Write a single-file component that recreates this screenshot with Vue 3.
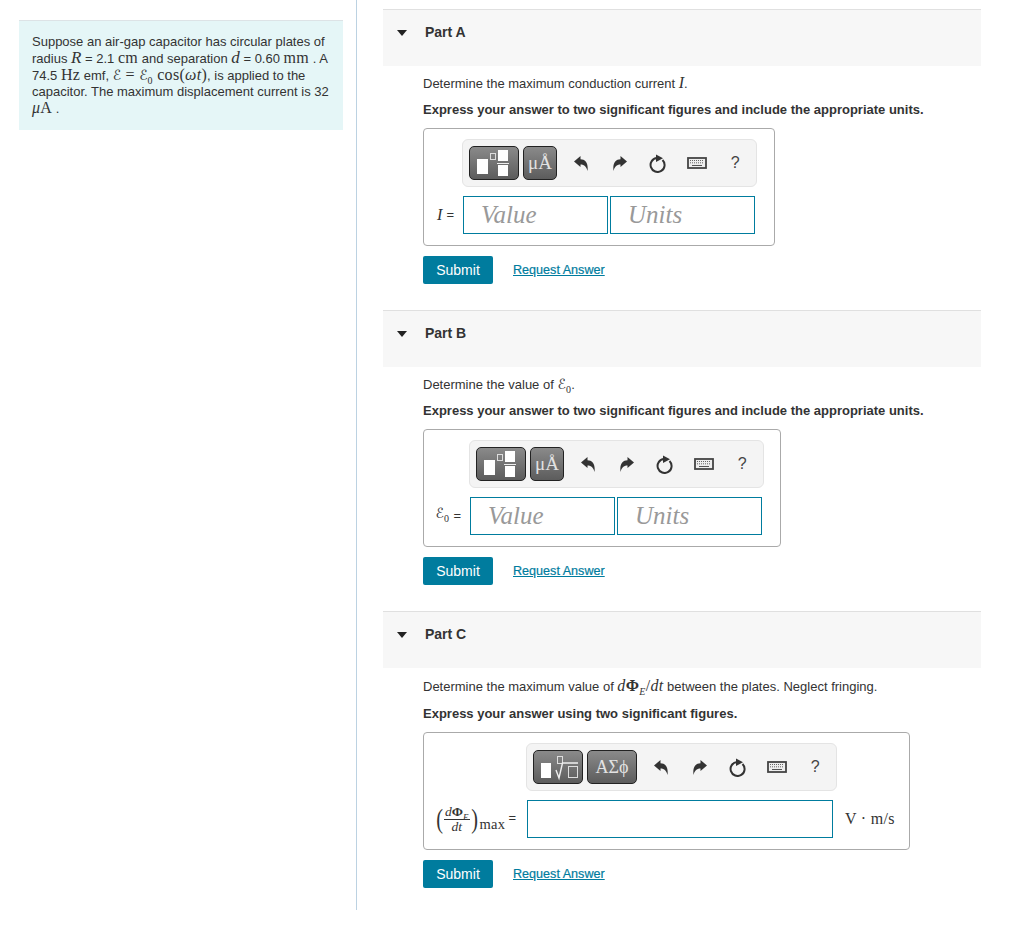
<template>
  <div class="page">
    <aside class="side">
      <div class="intro">
        Suppose an air-gap capacitor has circular plates of radius
        <span class="mi big">R</span> = 2.1 <span class="mn">cm</span> and separation
        <span class="mi big">d</span> = 0.60 <span class="mn">mm</span> . A
        74.5 <span class="mn">Hz</span> emf, <span class="mn"><span class="script">ℰ</span> = <span class="script">ℰ</span><sub>0</sub> cos(<i>ωt</i>)</span>, is applied to the
        capacitor. The maximum displacement current is 32
        <span class="mn"><i>μ</i>A</span> .
      </div>
    </aside>

    <main class="parts">
      <section v-for="part in parts" :key="part.id" class="part" :class="`part-${part.id}`">
        <header class="part-head">
          <span class="caret"></span>
          <h2>Part {{ part.id }}</h2>
        </header>

        <p class="prompt">
          <template v-if="part.id === 'A'">Determine the maximum conduction current <span class="mi">I</span>.</template>
          <template v-else-if="part.id === 'B'">Determine the value of <span class="mn"><span class="script">ℰ</span><sub>0</sub></span>.</template>
          <template v-else>Determine the maximum value of <span class="mn"><i>d</i><b>Φ</b><sub><i>E</i></sub>/<i>dt</i></span> between the plates. Neglect fringing.</template>
        </p>
        <p class="hint">{{ part.hint }}</p>

        <div class="answer">
          <div class="toolbar">
            <button class="tpl wide" type="button">
              <svg v-if="part.id !== 'C'" width="48" height="32" viewBox="0 0 48 32">
                <rect x="7" y="12" width="11" height="15" fill="#fff" />
                <rect x="20.5" y="6.5" width="5" height="6" fill="none" stroke="#ddd" />
                <rect x="28" y="3" width="10" height="11" fill="#fff" />
                <rect x="27" y="16" width="12" height="1" fill="#eee" />
                <rect x="28" y="18" width="10" height="11" fill="#fff" />
              </svg>
              <svg v-else width="48" height="32" viewBox="0 0 48 32">
                <rect x="7" y="12" width="10" height="15" fill="#fff" />
                <rect x="23.5" y="5.5" width="5" height="7" fill="none" stroke="#ddd" />
                <path d="M22 19l3 8 3.500-15H44" fill="none" stroke="#eee" stroke-width="1.400" />
                <rect x="34.500" y="15.500" width="9" height="11" fill="none" stroke="#ddd" />
              </svg>
            </button>
            <button class="tpl" :class="{ wide: part.id === 'C' }" type="button">{{ part.symbols }}</button>

            <div class="tools">
              <svg width="14" height="15" viewBox="0 0 14 15"><path d="M0 5.500 6.500 0v3.200c5 0 8 3.800 7 11.800C12.500 11 10.500 8.500 6.500 8.500V11z" fill="#333" /></svg>
              <svg width="14" height="15" viewBox="0 0 14 15"><path d="M14 5.500 7.500 0v3.200c-5 0-8 3.800-7 11.800C1.500 11 3.500 8.500 7.500 8.500V11z" fill="#333" /></svg>
              <svg width="18" height="19" viewBox="0 0 18 19">
                <path d="M13.500 6A7 7 0 1 1 8 4" fill="none" stroke="#333" stroke-width="2" />
                <path d="M7 0.500 14 4.200 7 8z" fill="#333" />
              </svg>
              <svg width="20" height="12" viewBox="0 0 20 12">
                <rect x="1" y="1" width="18" height="10" fill="#eee" stroke="#444" stroke-width="1.800" />
                <path d="M3 3.500h14M3 5.800h14" stroke="#666" stroke-dasharray="1 1" />
                <path d="M5 8.500h10" stroke="#555" />
              </svg>
              <span class="help">?</span>
            </div>
          </div>

          <div class="label">
            <template v-if="part.id === 'A'"><span class="mi">I</span> =</template>
            <template v-else-if="part.id === 'B'"><span class="mn"><span class="script">ℰ</span><sub>0</sub></span> =</template>
            <template v-else>
              <span class="rate">
                <span class="paren">(</span>
                <span class="frac"><span class="num"><i>d</i><b>Φ</b><sub><i>E</i></sub></span><span class="den"><i>dt</i></span></span>
                <span class="paren">)</span>
                <span class="max">max</span>
              </span>
              <span class="eq">=</span>
            </template>
          </div>

          <div class="inputs">
            <template v-if="part.units">
              <input class="field" type="text" placeholder="Value" />
              <input class="field" type="text" placeholder="Units" />
            </template>
            <input v-else class="field single" type="text" />
          </div>
          <div v-if="!part.units" class="unit">V · m/s</div>
        </div>

        <div class="actions">
          <button class="submit" type="button">Submit</button>
          <a class="reveal" href="#">Request Answer</a>
        </div>
      </section>
    </main>
  </div>
</template>

<script setup>
const unitHint = 'Express your answer to two significant figures and include the appropriate units.'

const parts = [
  { id: 'A', hint: unitHint, symbols: 'μÅ', units: true },
  { id: 'B', hint: unitHint, symbols: 'μÅ', units: true },
  { id: 'C', hint: 'Express your answer using two significant figures.', symbols: 'ΑΣϕ', units: false }
]
</script>

<style>
body {
  background: #fff;
}
</style>

<style scoped>
.page {
  display: flex;
  width: 1021px;
  font-family: "Liberation Sans", Arial, sans-serif;
  font-size: 13px;
  line-height: 16px;
  color: #333;
}

.side {
  box-sizing: border-box;
  width: 357px;
  padding: 20px 0 0 19px;
  border-right: 1px solid #bcd2e2;
}

.intro {
  box-sizing: border-box;
  width: 324px;
  height: 110px;
  padding: 13px 10px 0 13px;
  border-top: 1px solid #dde3e6;
  background: #e5f6f7;
  line-height: 16.750px;
}

/* line-height 0 so inline math never stretches the text lines */
.mi {
  font-family: "Liberation Serif", serif;
  font-style: italic;
  font-size: 16px;
  line-height: 0;
}

.mi.big {
  font-size: 17px;
}

.mn {
  font-family: "Liberation Serif", serif;
  font-size: 16px;
  letter-spacing: 0.300px;
  line-height: 0;
}

.script {
  font-family: "DejaVu Sans", sans-serif;
  font-size: 14px;
  letter-spacing: 0;
}

sub {
  font-size: 10px;
  line-height: 0;
}

.parts {
  flex: 1;
  padding: 9px 0 22px 26px;
}

.part {
  width: 598px;
  margin-bottom: 26px;
}

.part:last-child {
  margin-bottom: 0;
}

.part-head {
  display: flex;
  height: 57px;
  padding-top: 14px;
  box-sizing: border-box;
  border-top: 1px solid #e0e0e0;
  background: #f7f7f7;
}

.caret {
  width: 0;
  height: 0;
  margin: 6px 18px 0 14px;
  border-left: 5.500px solid transparent;
  border-right: 5.500px solid transparent;
  border-top: 6px solid #222;
}

.part-head h2 {
  margin: 0;
  font-size: 14px;
  font-weight: bold;
  line-height: 16px;
}

.prompt,
.hint {
  margin: 0 0 0 40px;
}

.prompt {
  padding-top: 10px;
}

.hint {
  padding-top: 10px;
  font-weight: bold;
}

.part-C .prompt {
  padding-top: 11px;
}

.part-C .hint {
  padding-top: 11px;
}

.answer {
  display: grid;
  grid-template-columns: 39px auto auto;
  row-gap: 9px;
  align-items: center;
  width: fit-content;
  margin: 10px 0 0 40px;
  padding: 10px 17px 11px 0;
  border: 1px solid #aaa;
  border-radius: 4px;
}

.part-B .answer {
  grid-template-columns: 46px auto auto;
  padding-right: 16px;
}

.part-C .answer {
  grid-template-columns: 103px auto auto;
  padding-right: 14px;
}

.toolbar {
  grid-column: 2 / 4;
  grid-row: 1;
  display: flex;
  align-items: center;
  justify-self: start;
  height: 48px;
  box-sizing: border-box;
  margin-left: -1px;
  padding-left: 6px;
  border: 1px solid #e4e4e4;
  border-radius: 6px;
  background: #f4f4f4;
}

.tpl {
  width: 34px;
  height: 34px;
  margin-right: 4px;
  padding: 0;
  border: 1px solid #222;
  border-radius: 5px;
  background: linear-gradient(#8a8a8a, #5c5c5c);
  color: #e2e2e2;
  font-family: "Liberation Serif", serif;
  font-size: 19px;
  line-height: 30px;
}

.tpl.wide {
  width: 50px;
  font-size: 18px;
}

.tpl svg {
  display: block;
}

.tools {
  display: grid;
  grid-template-columns: repeat(5, 38.500px);
  justify-items: center;
  align-items: center;
  margin-left: 1px;
  padding-right: 1px;
}

.help {
  font-size: 16px;
  color: #444;
}

.label {
  grid-column: 1;
  grid-row: 2;
  justify-self: end;
  display: flex;
  align-items: center;
  gap: 4px;
  padding-right: 9px;
  white-space: nowrap;
}

.part-C .label {
  gap: 3px;
  padding-right: 11px;
}

.rate {
  display: inline-flex;
  align-items: center;
  font-family: "Liberation Serif", serif;
}

.paren {
  font-size: 27px;
  font-weight: normal;
  line-height: 1;
  transform: scaleX(0.75);
}

.frac {
  display: inline-flex;
  flex-direction: column;
  align-items: center;
  font-size: 13.500px;
  line-height: 14px;
}

.num {
  padding: 0 1px;
  border-bottom: 1px solid #333;
}

.num sub {
  font-size: 9px;
}

.max {
  align-self: flex-end;
  margin-left: 1px;
  font-size: 14.500px;
  letter-spacing: 0.300px;
  line-height: 14px;
  padding-bottom: 3px;
}

.eq {
  margin-top: -2px;
}

.inputs {
  grid-column: 2;
  grid-row: 2;
  display: flex;
  gap: 2px;
}

.field {
  box-sizing: border-box;
  width: 145px;
  height: 38px;
  padding: 0 0 0 17px;
  border: 1px solid #007c9e;
  border-radius: 0;
  background: #fff;
  font-family: "Liberation Serif", serif;
  font-size: 25px;
  font-style: italic;
  outline: none;
}

.field::placeholder {
  color: #999;
  opacity: 1;
}

.field.single {
  width: 306px;
}

.unit {
  grid-column: 3;
  grid-row: 2;
  margin-left: 12px;
  font-family: "Liberation Serif", serif;
  font-size: 16px;
  letter-spacing: 0.300px;
  white-space: nowrap;
}

.actions {
  display: flex;
  align-items: center;
  margin: 10px 0 0 40px;
}

.submit {
  width: 70px;
  height: 28px;
  padding: 0;
  border: 0;
  border-radius: 2px;
  background: #007c9e;
  color: #fff;
  font-family: inherit;
  font-size: 14px;
}

.reveal {
  margin-left: 20px;
  color: #007c9e;
  font-size: 12.600px;
  -webkit-text-stroke: 0.200px #007c9e;
}
</style>
